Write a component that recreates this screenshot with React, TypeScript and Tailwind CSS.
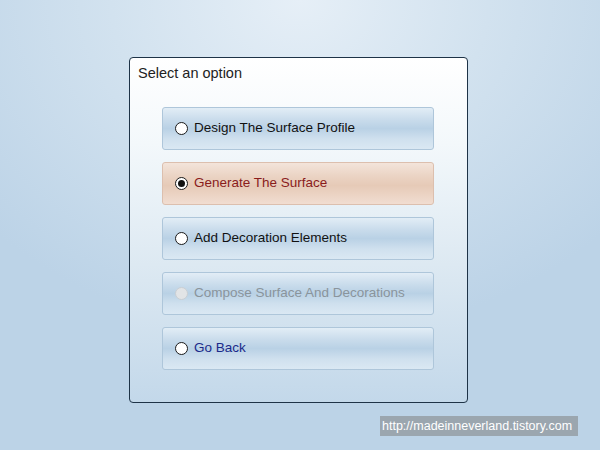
import React from 'react';

type Option = {
  label: string;
  state: 'normal' | 'selected' | 'disabled' | 'link';
};

const options: Option[] = [
  { label: 'Design The Surface Profile', state: 'normal' },
  { label: 'Generate The Surface', state: 'selected' },
  { label: 'Add Decoration Elements', state: 'normal' },
  { label: 'Compose Surface And Decorations', state: 'disabled' },
  { label: 'Go Back', state: 'link' },
];

const Radio: React.FC<{ checked?: boolean; disabled?: boolean }> = ({ checked, disabled }) => (
  <span
    className={
      disabled
        ? 'w-[13px] h-[13px] rounded-full border border-[#c9ced3] bg-[#e2e4e6] flex items-center justify-center shrink-0'
        : 'w-[13px] h-[13px] rounded-full border border-[#1a1a1a] bg-white flex items-center justify-center shrink-0'
    }
  >
    {checked && <span className="w-[7px] h-[7px] rounded-full bg-[#111]" />}
  </span>
);

const OptionButton: React.FC<{ option: Option }> = ({ option }) => {
  const selected = option.state === 'selected';
  const box = selected
    ? 'border-[#dcbfae] bg-[linear-gradient(to_bottom,#f3e4da_0%,#ead2c2_35%,#e6cab7_55%,#f1ddd1_100%)]'
    : 'border-[#aec6da] bg-[linear-gradient(to_bottom,#e2edf6_0%,#c8dbeb_30%,#b9d1e5_50%,#cfe0ee_75%,#dae8f3_100%)]';
  const text =
    option.state === 'selected'
      ? 'text-[#8a1c1c]'
      : option.state === 'disabled'
      ? 'text-[#8a949c]'
      : option.state === 'link'
      ? 'text-[#1a2a8a]'
      : 'text-[#111]';

  return (
    <div className={`h-[43px] rounded-[3px] border ${box} flex items-center pl-[12px] gap-[6px]`}>
      <Radio checked={selected} disabled={option.state === 'disabled'} />
      <span className={`text-[13.5px] ${text}`}>{option.label}</span>
    </div>
  );
};

const App: React.FC = () => {
  return (
    <div
      className="w-[600px] h-[450px] relative overflow-hidden bg-[radial-gradient(ellipse_70%_75%_at_50%_0%,#e6eff7_0%,#d2e2ef_45%,#bcd3e7_100%)]"
      style={{ fontFamily: '"Liberation Sans", Arial, sans-serif' }}
    >
      <div className="pt-[57px] pl-[129px]">
        {/* Dialog panel */}
        <div className="w-[339px] h-[346px] rounded-[4px] border border-[#1e3347] bg-[linear-gradient(to_bottom,#ffffff_0%,#f3f8fb_25%,#dde9f2_60%,#c3d8ea_100%)] pt-[5px]">
          <div className="pl-[8px] text-[14.5px] text-[#222]">Select an option</div>
          <div className="mt-[22px] ml-[32px] w-[272px] flex flex-col gap-[12px]">
            {options.map((o) => (
              <OptionButton key={o.label} option={o} />
            ))}
          </div>
        </div>
      </div>

      {/* Watermark */}
      <div className="absolute left-[380px] top-[416px] w-[198px] h-[20px] bg-[#9ba6af] text-white text-[12.5px] flex items-center pl-[2px] whitespace-nowrap overflow-hidden">
        http://madeinneverland.tistory.com
      </div>
    </div>
  );
};

export default App;
